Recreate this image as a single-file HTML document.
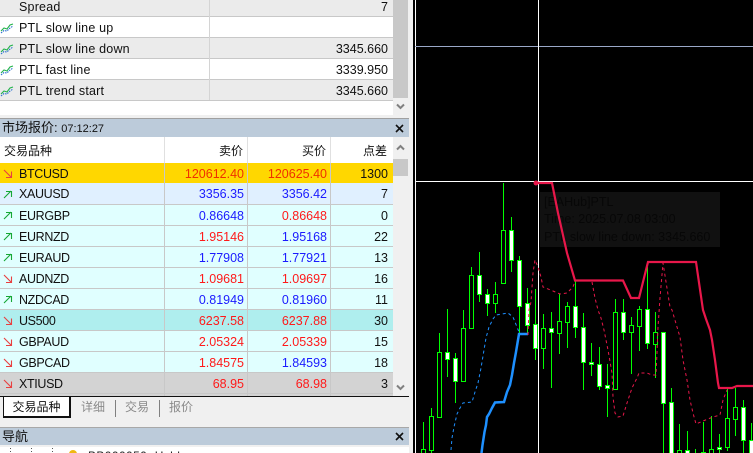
<!DOCTYPE html>
<html><head><meta charset="utf-8">
<style>
*{box-sizing:border-box}
html,body{margin:0;padding:0;width:753px;height:453px;overflow:hidden;background:#f0f0f0}
body{position:relative;font:12.5px "Liberation Sans","Noto Sans CJK SC",sans-serif;color:#111}
.a{position:absolute}
.r{position:absolute;left:0;width:393px;height:21px;border-bottom:1px solid #c8c8c8;line-height:22px;white-space:nowrap}
.n{position:absolute;left:19px;top:0;letter-spacing:-.35px;font-size:12.5px}
.m{letter-spacing:.2px}
.c1,.c2,.c3{position:absolute;top:0;text-align:right;height:20px}
.c1{left:165px;width:79px}.c2{left:248px;width:79px}.c3{left:331px;width:57px}
.s1,.s2,.s3{position:absolute;top:0;width:1px;height:21px;background:#c8c8c8}
.s1{left:164px}.s2{left:247px}.s3{left:330px}
.b{color:#1a1aff}.d{color:#ff1a1a}
.g{background:#ffd700}.l{background:#e0f0ff}.t{background:#e0ffff}.p{background:#afeeee}.k{background:#d3d3d3}
.w{background:#fff}.e{background:#ebebeb}
.v{position:absolute;right:5px;top:0}
.h{position:absolute;left:0;width:409px;background:#bccbda;line-height:17px;padding-left:2px;font-size:13px}
svg.i{position:absolute;left:0;top:0;overflow:visible}
.tab{position:absolute;top:400px;color:#8a8a8a;font-size:12px;line-height:14px}
</style></head><body>

<div class="a" style="left:0;top:0;width:393px;height:115px;background:#fff"></div>
<div class="r e" style="top:-4px"><span class="n m">Spread</span><span class="v">7</span></div>
<div class="r w" style="top:17px"><span class="n m">PTL slow line up</span></div>
<div class="r e" style="top:38px"><span class="n m">PTL slow line down</span><span class="v">3345.660</span></div>
<div class="r w" style="top:59px"><span class="n m">PTL fast line</span><span class="v">3339.950</span></div>
<div class="r e" style="top:80px"><span class="n m">PTL trend start</span><span class="v">3345.660</span></div>
<div class="a" style="left:209px;top:0;width:1px;height:100px;background:#d4d4d4"></div>
<div class="a" style="left:393px;top:0;width:15px;height:98px;background:#c8c8c8"></div>

<div class="a" style="left:0;top:118px;width:409px;height:1px;background:#a0a0a0"></div>
<div class="h" style="top:119px;height:18px;line-height:18px">市场报价: <span style="font-size:11px">07:12:27</span></div>

<div class="a" style="left:0;top:137px;width:393px;height:26px;background:#fff;line-height:28px;font-size:12px">
<span class="a" style="left:4px;top:0">交易品种</span>
<span class="c1" style="height:26px;width:78px">卖价</span><span class="c2" style="height:26px;width:78px">买价</span><span class="c3" style="height:26px;width:56px">点差</span>
<i class="s1" style="height:26px;background:#e0e0e0"></i><i class="s2" style="height:26px;background:#e0e0e0"></i><i class="s3" style="height:26px;background:#e0e0e0"></i></div>

<div class="r g" style="top:163px;border:0;height:20px"><span class="n">BTCUSD</span><span class="c1" style="color:#f03000">120612.40</span><span class="c2" style="color:#f03000">120625.40</span><span class="c3">1300</span><i class="s1"></i><i class="s2"></i><i class="s3"></i></div>
<div class="r l" style="top:183px;height:22px;line-height:23px"><span class="n">XAUUSD</span><span class="c1 b">3356.35</span><span class="c2 b">3356.42</span><span class="c3">7</span><i class="s1"></i><i class="s2"></i><i class="s3"></i></div>
<div class="r t" style="top:205px"><span class="n">EURGBP</span><span class="c1 b">0.86648</span><span class="c2 d">0.86648</span><span class="c3">0</span><i class="s1"></i><i class="s2"></i><i class="s3"></i></div>
<div class="r t" style="top:226px"><span class="n">EURNZD</span><span class="c1 d">1.95146</span><span class="c2 b">1.95168</span><span class="c3">22</span><i class="s1"></i><i class="s2"></i><i class="s3"></i></div>
<div class="r t" style="top:247px"><span class="n">EURAUD</span><span class="c1 b">1.77908</span><span class="c2 b">1.77921</span><span class="c3">13</span><i class="s1"></i><i class="s2"></i><i class="s3"></i></div>
<div class="r t" style="top:268px"><span class="n">AUDNZD</span><span class="c1 d">1.09681</span><span class="c2 d">1.09697</span><span class="c3">16</span><i class="s1"></i><i class="s2"></i><i class="s3"></i></div>
<div class="r t" style="top:289px"><span class="n">NZDCAD</span><span class="c1 b">0.81949</span><span class="c2 b">0.81960</span><span class="c3">11</span><i class="s1"></i><i class="s2"></i><i class="s3"></i></div>
<div class="r p" style="top:310px"><span class="n">US500</span><span class="c1 d">6237.58</span><span class="c2 d">6237.88</span><span class="c3">30</span><i class="s1"></i><i class="s2"></i><i class="s3"></i></div>
<div class="r t" style="top:331px"><span class="n">GBPAUD</span><span class="c1 d">2.05324</span><span class="c2 d">2.05339</span><span class="c3">15</span><i class="s1"></i><i class="s2"></i><i class="s3"></i></div>
<div class="r t" style="top:352px"><span class="n">GBPCAD</span><span class="c1 d">1.84575</span><span class="c2 b">1.84593</span><span class="c3">18</span><i class="s1"></i><i class="s2"></i><i class="s3"></i></div>
<div class="r k" style="top:373px"><span class="n">XTIUSD</span><span class="c1 d">68.95</span><span class="c2 d">68.98</span><span class="c3">3</span><i class="s1"></i><i class="s2"></i><i class="s3"></i></div>
<div class="r k" style="top:394px;height:2px;border:0"><i class="s1" style="height:2px"></i><i class="s2" style="height:2px"></i><i class="s3" style="height:2px"></i></div>

<div class="a" style="left:393px;top:159px;width:15px;height:17px;background:#c8c8c8"></div>

<div class="a" style="left:0;top:396px;width:409px;height:1px;background:#111"></div>
<div class="a" style="left:3px;top:396px;width:68px;height:22px;background:#fff;border:1px solid #111;border-right-width:2px;border-bottom-width:2px;font-size:12px;line-height:20px;text-align:center">交易品种</div>
<span class="tab" style="left:81px">详细</span>
<span class="tab" style="left:125px">交易</span>
<span class="tab" style="left:169px">报价</span>
<div class="a" style="left:115px;top:400px;width:1px;height:17px;background:#808080"></div>
<div class="a" style="left:159px;top:400px;width:1px;height:17px;background:#808080"></div>

<div class="a" style="left:0;top:427px;width:409px;height:1px;background:#a8a8a8"></div>
<div class="h" style="top:428px;height:17px">导航</div>
<div class="a" style="left:0;top:447px;width:409px;height:6px;background:#fff"></div>
<div class="a" style="left:88px;top:449px;font-size:12px;line-height:14px;letter-spacing:.4px;color:#222">BB000050: Hxhlw</div>

<svg class="i" width="753" height="453" viewBox="0 0 753 453">
<defs>
<g id="up" fill="none" stroke="#16a835" stroke-width="1.1"><path d="M4 8 11 1M6 1.500H11.500V7"/></g>
<g id="dn" fill="none" stroke="#e84040" stroke-width="1.1"><path d="M4 1 11 8M11.500 2.500V8.500H6"/></g>
<g id="ind" fill="none" stroke-width="1.1"><path d="M1 8 4 5 7 6 10 2 13 1" stroke="#22b24a"/><path d="M1 10 4 7.500 7 8 10 5 13 3" stroke="#2a70d0" stroke-dasharray="1.500 1"/></g>
</defs>
<use href="#ind" y="23"/><use href="#ind" y="44"/><use href="#ind" y="65"/><use href="#ind" y="86"/>
<use href="#dn" y="169"/><use href="#up" y="190"/><use href="#up" y="211"/><use href="#up" y="232"/><use href="#up" y="253"/>
<use href="#dn" y="274"/><use href="#up" y="295"/><use href="#dn" y="316"/><use href="#dn" y="337"/><use href="#dn" y="358"/><use href="#dn" y="379"/>

<path d="M397 104.500 400.500 108 404 104.500M397 149.500 400.500 146 404 149.500M397 385.500 400.500 389 404 385.500" fill="none" stroke="#808080" stroke-width="2"/>
<path d="M396 125 403 132M403 125 396 132M396 433 403 440M403 433 396 440" fill="none" stroke="#111" stroke-width="1.600"/>

<path d="M10.500 448V453M31.500 448V453M52.500 448V453" stroke="#555" stroke-dasharray="1 2"/>
<circle cx="73" cy="454" r="4" fill="#f0b810"/>

<rect x="413" y="0" width="340" height="453" fill="#000"/>
<rect x="540" y="192" width="180" height="55" fill="#111"/>
<g font-family="Liberation Sans,sans-serif" font-size="12.500" fill="#070707">
<text x="544" y="206">[EAHub]PTL</text>
<text x="544" y="223">Time: 2025.07.08 03:00</text>
<text x="544" y="241">PTL slow line down: 3345.660</text>
</g>

<path shape-rendering="crispEdges" d="M415.500 0V453M538.500 0V453M415 181.500H753" stroke="#fff" fill="none"/>
<path shape-rendering="crispEdges" d="M415 46.500H538M539 46.500H753" stroke="#9aa8c8" fill="none"/>

<path shape-rendering="crispEdges" stroke="#00ff00" fill="none" d="M423.500 422V453M431.500 408V453M439.500 333V418M447.500 309V377M455.500 353V403M463.500 310V381M471.500 267V328M479.500 252V302M487.500 289V316M495.500 282V313M503.500 183V283M511.500 217V272M519.500 256V333M527.500 288V335M535.500 289V360M543.500 314V369M551.500 312V388M559.500 294V354M567.500 302V348M575.500 281V338M583.500 313V390M591.500 343V376M599.500 347V390M607.500 364V417M615.500 299V390M623.500 299V340M631.500 317V374M639.500 306V351M647.500 267V349M655.500 312V378M663.500 332V453M671.500 388V453M679.500 424V453M687.500 431V453M695.500 449V453M703.500 422V453M711.500 416V453M719.500 434V453M727.500 389V451M735.500 388V436M743.500 400V453M751.500 423V453"/>
<path shape-rendering="crispEdges" stroke="#00ff00" fill="#000" d="M421.500 449.500h4v11h-4zM429.500 416.500h4v34h-4zM437.500 352.500h4v65h-4zM461.500 328.500h4v53h-4zM469.500 275.500h4v53h-4zM493.500 294.500h4v9h-4zM501.500 230.500h4v53h-4zM541.500 328.500h4v20h-4zM557.500 321.500h4v12h-4zM565.500 306.500h4v16h-4zM613.500 312.500h4v77h-4zM629.500 325.500h4v7h-4zM637.500 309.500h4v17h-4zM653.500 332.500h4v12h-4zM677.500 450.500h4v10h-4zM701.500 452.500h4v8h-4zM709.500 449.500h4v8h-4zM725.500 418.500h4v29h-4zM733.500 407.500h4v12h-4z"/>
<path shape-rendering="crispEdges" stroke="#00ff00" fill="#fff" d="M445.500 352.500h4v7h-4zM453.500 358.500h4v23h-4zM477.500 275.500h4v19h-4zM485.500 294.500h4v9h-4zM509.500 230.500h4v30h-4zM517.500 260.500h4v46h-4zM525.500 303.500h4v22h-4zM533.500 324.500h4v24h-4zM549.500 328.500h4v4h-4zM573.500 306.500h4v21h-4zM581.500 327.500h4v35h-4zM589.500 362.500h4v2h-4zM597.500 364.500h4v22h-4zM605.500 385.500h4v3h-4zM621.500 312.500h4v20h-4zM645.500 309.500h4v34h-4zM661.500 332.500h4v71h-4zM669.500 402.500h4v58h-4zM685.500 450.500h4v10h-4zM717.500 447.500h4v2h-4zM741.500 407.500h4v33h-4zM749.500 440.500h4v20h-4z"/>

<path fill="none" stroke="#1e90ff" stroke-width="1" stroke-dasharray="3 3" d="M451 450 452 438 454 427 457 414 460 408 463 403 472 402 475 392 478 383 481 368 484 350 486 338 489 327 493 319 496 315 508 313 513 317 517 327 519 332"/>
<path fill="none" stroke="#1e90ff" stroke-width="2.500" d="M481.500 453 482.500 445 484.500 432 486 425 487 417 489 414 492 408 495 402.500 504 402 507 392 510 385 512 375 514 363 516 352 518 340 519 334H528"/>

<path fill="none" stroke="#e8174a" stroke-width="1" stroke-dasharray="3 3" d="M528 335 529 310 531 302 533 273 535 260 538 267 541 277 543 287 553 291 560 294 567 293 573 287 575 281"/>
<path fill="none" stroke="#e8174a" stroke-width="1" stroke-dasharray="3 3" d="M592 282 595 298 598 310 601 318 604 330 608 350 612 373 613 397 615 413 618 417 623 416 627 403 632 388 637 378 639 373 647 373 652 375 656 375 657 353 658 327 660 298 663 263 670 307 672 310 677 327 680 337 683 360 687 380 690 400 693 413 696 424 703 421 713 417 720 415 723 400 727 390"/>
<path fill="none" stroke="#e8174a" stroke-width="2.200" d="M536 183H552L558 213 567 253 575 280.500H623L631 298H639L648 262H696L703 310 706 319 710 330 712 340 715 360 718 383 719 388H732L737 386H753"/>
<circle cx="536" cy="183" r="2.500" fill="#e8174a"/>
</svg>
</body></html>
